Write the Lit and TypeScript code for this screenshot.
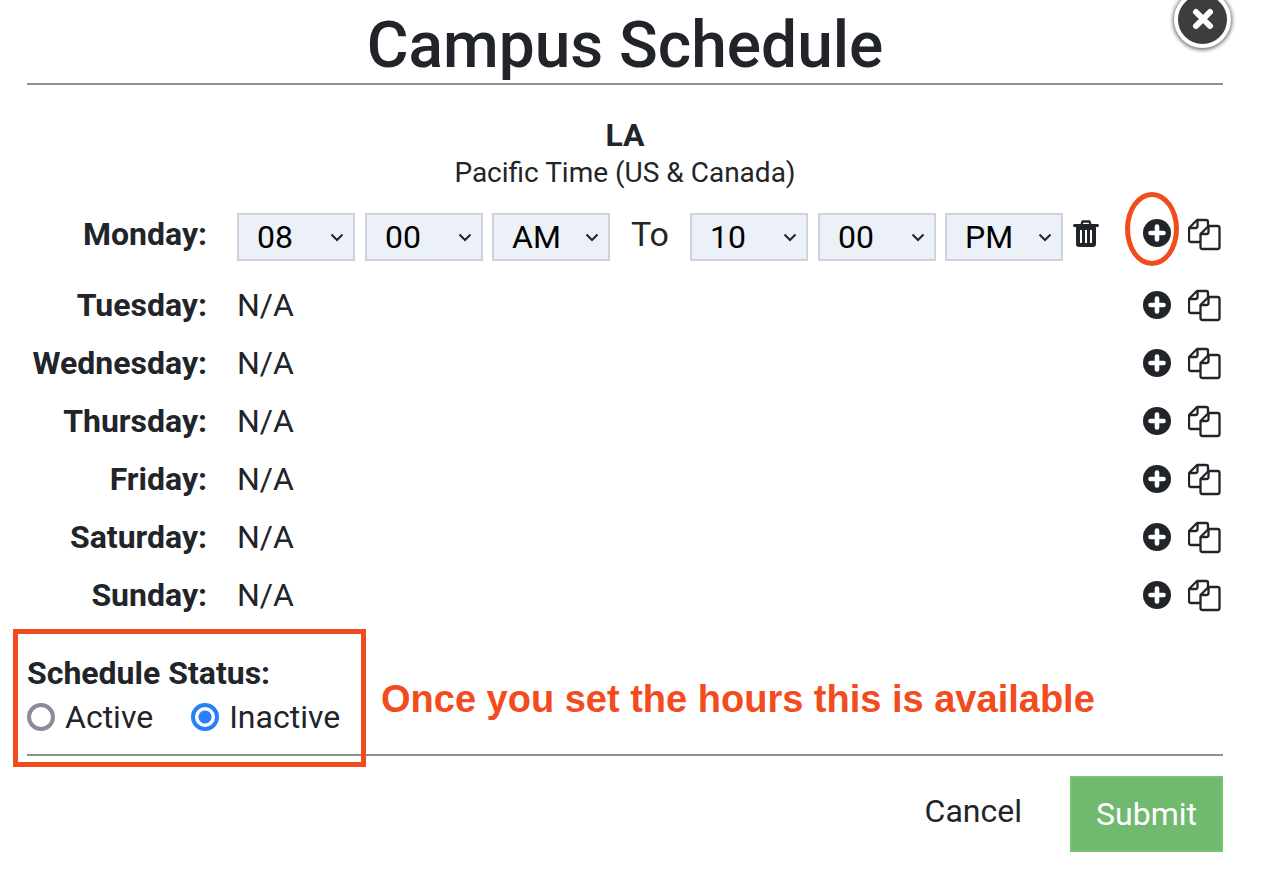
import { LitElement, html, css, svg } from "lit";
import { customElement } from "lit/decorators.js";

const plusIcon = html`<svg class="plus" viewBox="0 0 28 28">
  <circle cx="14" cy="14" r="14" fill="#212529"></circle>
  <path d="M14 7.5v13M7.5 14h13" stroke="#fff" stroke-width="4.6" stroke-linecap="round"></path>
</svg>`;

const copyIcon = html`<svg class="copy" viewBox="0 0 33 33" fill="none" stroke="#212529" stroke-width="2.3" stroke-linejoin="round">
  <path d="M12 24H3a2 2 0 0 1-2-2V10l8-8h9a2 2 0 0 1 2 2v4"></path>
  <path d="M9.500 2v6a2 2 0 0 1-2 2H1"></path>
  <path d="M14.500 31a2 2 0 0 1-2-2V16l8-8h9a2 2 0 0 1 2 2v19a2 2 0 0 1-2 2z" fill="#fff"></path>
  <path d="M20.500 8v6a2 2 0 0 1-2 2h-6"></path>
</svg>`;

const trashIcon = svg`<svg class="trash" viewBox="0 0 26 27">
  <path d="M8.500 4l1.200-2.500h6.600L17.500 4" fill="none" stroke="#212529" stroke-width="2.400"></path>
  <path d="M0 5.500a1.500 1.500 0 0 1 1.500-1.500h23a1.500 1.500 0 0 1 0 3h-23A1.500 1.500 0 0 1 0 5.500z" fill="#212529"></path>
  <path fill-rule="evenodd" fill="#212529" d="M3 7h20v17a3 3 0 0 1-3 3H6a3 3 0 0 1-3-3zM7 10v13h2V10zM12 10v13h2V10zM17 10v13h2V10z"></path>
</svg>`;

const chevron = html`<svg class="chevron" viewBox="0 0 14 9" fill="none" stroke="#212529" stroke-width="2">
  <path d="M1.500 1.500L7 7l5.500-5.500"></path>
</svg>`;

const closedDays = ["Tuesday", "Wednesday", "Thursday", "Friday", "Saturday", "Sunday"];

@customElement("app-root")
export class AppRoot extends LitElement {
  static styles = css`
    :host {
      display: block;
      position: relative;
      width: 1262px;
      height: 870px;
      background: #fff;
      color: #212529;
      font-family: Roboto, "Liberation Sans", sans-serif;
      overflow: hidden;
    }
    .modal {
      display: flex;
      flex-direction: column;
      padding: 0 39px 0 27px;
    }
    h1 {
      margin: 0;
      height: 83px;
      border-bottom: 2px solid #8f8f8f;
      font-size: 64px;
      font-weight: 500;
      line-height: 92px;
      text-align: center;
    }
    .campus {
      margin-top: 33px;
      text-align: center;
      font-size: 28px;
      line-height: 38px;
    }
    .campus b {
      display: block;
      margin-bottom: 2px;
      font-weight: 700;
      font-size: 32px;
      line-height: 34px;
    }
    .row {
      display: grid;
      grid-template-columns: 180px 1fr 28px 33px;
      align-items: center;
      height: 58px;
    }
    .row.first {
      height: 48px;
      margin-top: 21px;
      margin-bottom: 15px;
    }
    .row.first .label {
      margin-bottom: 6px;
    }
    .row.first .plus {
      margin-bottom: 8px;
    }
    .row.first .copy {
      margin-bottom: 6px;
    }
    .label {
      font-size: 32px;
      font-weight: 700;
      text-align: right;
    }
    .value {
      padding-left: 30px;
      font-size: 32px;
    }
    .times {
      display: flex;
      align-items: center;
      padding-left: 30px;
    }
    .select {
      display: flex;
      align-items: center;
      justify-content: space-between;
      box-sizing: border-box;
      width: 118px;
      height: 48px;
      margin-right: 10px;
      padding: 0 9px 0 18px;
      background: #ecf0f7;
      border: 2px solid #cdd3dd;
      color: #000;
      font-size: 32px;
    }
    .select.tight {
      margin-left: -1px;
    }
    .select.last {
      margin-right: 9px;
    }
    .to {
      width: 60px;
      margin: -6px 10px 0 0;
      text-align: center;
      font-size: 34px;
    }
    .trash {
      width: 26px;
      height: 27px;
      margin: -7px 0 0 1px;
    }
    .chevron {
      width: 14px;
      height: 9px;
    }
    .plus {
      width: 28px;
      height: 28px;
      justify-self: start;
      margin-left: -19px;
    }
    .copy {
      width: 33px;
      height: 33px;
      justify-self: end;
      margin-right: 2px;
    }
    .status {
      margin-top: 31px;
      padding-bottom: 15px;
      border-bottom: 2px solid #8f8f8f;
    }
    .status strong {
      display: block;
      font-size: 32px;
      font-weight: 700;
      line-height: 36px;
    }
    .radios {
      display: flex;
      align-items: center;
      height: 44px;
      margin-top: 4px;
      font-size: 32px;
    }
    .radio {
      box-sizing: border-box;
      width: 28px;
      height: 28px;
      margin-right: 10px;
      border: 4px solid #8b8b99;
      border-radius: 50%;
      background: #fff;
    }
    .radio.on {
      border-color: #2a7ef7;
      background: radial-gradient(circle, #2a7ef7 0 6px, #fff 7px);
    }
    .gap {
      width: 38px;
    }
    .footer {
      display: flex;
      justify-content: flex-end;
      align-items: center;
      margin-top: 20px;
    }
    .cancel {
      margin: -6px 48px 0 0;
      font-size: 32px;
    }
    .submit {
      display: flex;
      align-items: center;
      justify-content: center;
      box-sizing: border-box;
      width: 153px;
      height: 76px;
      background: #70b96f;
      border: 2px solid #74c770;
      color: #fff;
      font-size: 32px;
    }
    .close {
      position: absolute;
      left: 1174px;
      top: -9px;
      box-sizing: border-box;
      width: 57px;
      height: 57px;
      border: 4px solid #fff;
      border-radius: 50%;
      background: #3d3d3d;
      box-shadow: 0 0 4px 1px rgba(0, 0, 0, 0.45), 0 2px 4px rgba(0, 0, 0, 0.3);
    }
    .close svg {
      display: block;
      width: 24px;
      height: 24px;
      margin: 12px auto 0;
    }
    .oval {
      position: absolute;
      left: 1125px;
      top: 192px;
      box-sizing: border-box;
      width: 54px;
      height: 74px;
      border: 5px solid #f24b1e;
      border-radius: 50%;
    }
    .box {
      position: absolute;
      left: 13px;
      top: 629px;
      box-sizing: border-box;
      width: 353px;
      height: 138px;
      border: 5px solid #f24b1e;
    }
    .note {
      position: absolute;
      left: 381px;
      top: 677px;
      color: #f24b1e;
      font-family: "Liberation Sans", Arial, sans-serif;
      font-size: 38px;
      font-weight: 700;
      line-height: 44px;
      white-space: nowrap;
    }
  `;

  renderSelect(text: string, cls = "") {
    return html`<div class="select ${cls}"><span>${text}</span>${chevron}</div>`;
  }

  render() {
    return html`
      <div class="modal">
        <h1>Campus Schedule</h1>
        <div class="campus">
          <b>LA</b>
          Pacific Time (US &amp; Canada)
        </div>
        <div class="row first">
          <div class="label">Monday:</div>
          <div class="times">
            ${this.renderSelect("08")} ${this.renderSelect("00")} ${this.renderSelect("AM", "tight")}
            <div class="to">To</div>
            ${this.renderSelect("10")} ${this.renderSelect("00")} ${this.renderSelect("PM", "tight last")}
            ${trashIcon}
          </div>
          ${plusIcon} ${copyIcon}
        </div>
        ${closedDays.map(
          (day) => html`
            <div class="row">
              <div class="label">${day}:</div>
              <div class="value">N/A</div>
              ${plusIcon} ${copyIcon}
            </div>
          `
        )}
        <div class="status">
          <strong>Schedule Status:</strong>
          <div class="radios">
            <span class="radio"></span>Active
            <span class="gap"></span>
            <span class="radio on"></span>Inactive
          </div>
        </div>
        <div class="footer">
          <span class="cancel">Cancel</span>
          <div class="submit">Submit</div>
        </div>
      </div>
      <div class="close">
        <svg viewBox="0 0 24 24"><path d="M5 5l14 14M19 5L5 19" stroke="#fff" stroke-width="6" stroke-linecap="round"></path></svg>
      </div>
      <div class="oval"></div>
      <div class="box"></div>
      <div class="note">Once you set the hours this is available</div>
    `;
  }
}
